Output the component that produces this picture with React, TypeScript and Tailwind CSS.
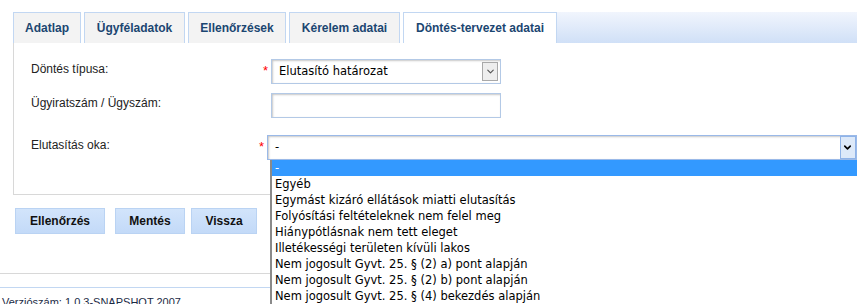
import { ChevronDown } from "lucide-react";

const tabs = [
  { label: "Adatlap", w: "w-[68px]" },
  { label: "Ügyféladatok", w: "w-[101px]" },
  { label: "Ellenőrzések", w: "w-[98px]" },
  { label: "Kérelem adatai", w: "w-[111px]" },
];

const reasons = [
  "-",
  "Egyéb",
  "Egymást kizáró ellátások miatti elutasítás",
  "Folyósítási feltételeknek nem felel meg",
  "Hiánypótlásnak nem tett eleget",
  "Illetékességi területen kívüli lakos",
  "Nem jogosult Gyvt. 25. § (2) a) pont alapján",
  "Nem jogosult Gyvt. 25. § (2) b) pont alapján",
  "Nem jogosult Gyvt. 25. § (4) bekezdés alapján",
];

const Star = () => <span className="w-[8px] text-[13px] leading-none text-[#ff0000] mt-[5px]">*</span>;

const App = () => {
  return (
    <div className="relative w-[857px] h-[304px] overflow-hidden bg-white font-['Liberation_Sans',Arial,sans-serif] text-[12px] text-[#222]">
      {/* Tabs */}
      <div className="flex pt-[12px] pl-[13px]">
        <div className="flex gap-[3px]">
          {tabs.map((t) => (
            <div
              key={t.label}
              className={`${t.w} h-[31px] flex items-center justify-center border border-b-0 border-[#c2d7f2] bg-[#f3f3f3] font-bold text-[#1b4671]`}
            >
              {t.label}
            </div>
          ))}
          <div className="w-[154px] h-[31px] flex items-center justify-center border border-b-0 border-[#c2d7f2] bg-white font-bold text-[#1b4671]">
            Döntés-tervezet adatai
          </div>
        </div>
        <div className="flex-1 h-[31px] bg-gradient-to-b from-[#f1f5fd] to-[#d0e0f7]" />
      </div>

      {/* Panel */}
      <div className="ml-[13px] h-[152px] border-l border-b border-[#d8d8d8] pt-[16px] pl-[17px]">
        <div className="flex h-[25px]">
          <div className="w-[232px] pt-[1px]">Döntés típusa:</div>
          <Star />
          <div className="w-[230px] h-[25px] flex items-center border border-[#b3c9e6] bg-white shadow-[inset_1px_1px_2px_#c8c8c8] pl-[7px] pr-[2px] font-['DejaVu_Sans',Verdana,sans-serif] text-[11.5px] text-black">
            <span className="flex-1">Elutasító határozat</span>
            <span className="w-[16px] h-[19px] flex items-center justify-center border border-[#a9a9a9] bg-[#eeeeee] text-[#555]">
              <ChevronDown size={11} strokeWidth={2.5} />
            </span>
          </div>
        </div>
        <div className="flex h-[25px] mt-[9px]">
          <div className="w-[240px] pt-[1px]">Ügyiratszám / Ügyszám:</div>
          <div className="w-[230px] h-[25px] border border-[#b3c9e6] bg-white shadow-[inset_1px_1px_2px_#c8c8c8]" />
        </div>
        <div className="flex h-[25px] mt-[17px]">
          <div className="w-[232px] pt-[1px]">Elutasítás oka:</div>
          <Star />
          <div className="w-[600px] h-[25px] flex items-center border border-[#9ab9e8] bg-white shadow-[inset_1px_1px_2px_#c8c8c8] pl-[7px] font-['DejaVu_Sans',Verdana,sans-serif] text-[11.5px] text-black">
            <span className="w-[565px]">-</span>
            <span className="w-[16px] h-[23px] flex items-center justify-center border border-[#8fb3e8] bg-[#dde9f9] text-black">
              <ChevronDown size={11} strokeWidth={3.5} />
            </span>
          </div>
        </div>
      </div>

      {/* Buttons */}
      <div className="flex mt-[13px] pl-[15px] font-bold text-[12px] text-[#111]">
        <button className="w-[90px] h-[26px] border border-[#bad3f3] bg-gradient-to-b from-[#d2e4fb] to-[#c3daf8]">Ellenőrzés</button>
        <button className="w-[70px] h-[26px] ml-[10px] border border-[#bad3f3] bg-gradient-to-b from-[#d2e4fb] to-[#c3daf8]">Mentés</button>
        <button className="w-[66px] h-[26px] ml-[6px] border border-[#bad3f3] bg-gradient-to-b from-[#d2e4fb] to-[#c3daf8]">Vissza</button>
      </div>

      {/* Footer lines */}
      <div className="mt-[39px] border-t border-[#d8d8d8] h-[14px]" />
      <div className="border-t border-[#c2d7f2] pt-[8px] pl-[2px] text-[11px] leading-[13px] text-[#1b2b45]">
        Verziószám: 1.0.3-SNAPSHOT 2007
      </div>

      {/* Open dropdown list */}
      <div className="absolute left-[270px] top-[160px] w-[600px] border-l-2 border-[#8a8a8a] bg-white font-['DejaVu_Sans',Verdana,sans-serif] text-[11.5px] text-black">
        {reasons.map((r, i) => (
          <div
            key={i}
            className={`h-[16px] leading-[16px] pl-[3px] ${i === 0 ? "bg-[#3399ff] text-white" : ""}`}
          >
            {r}
          </div>
        ))}
      </div>
    </div>
  );
};

export default App;
